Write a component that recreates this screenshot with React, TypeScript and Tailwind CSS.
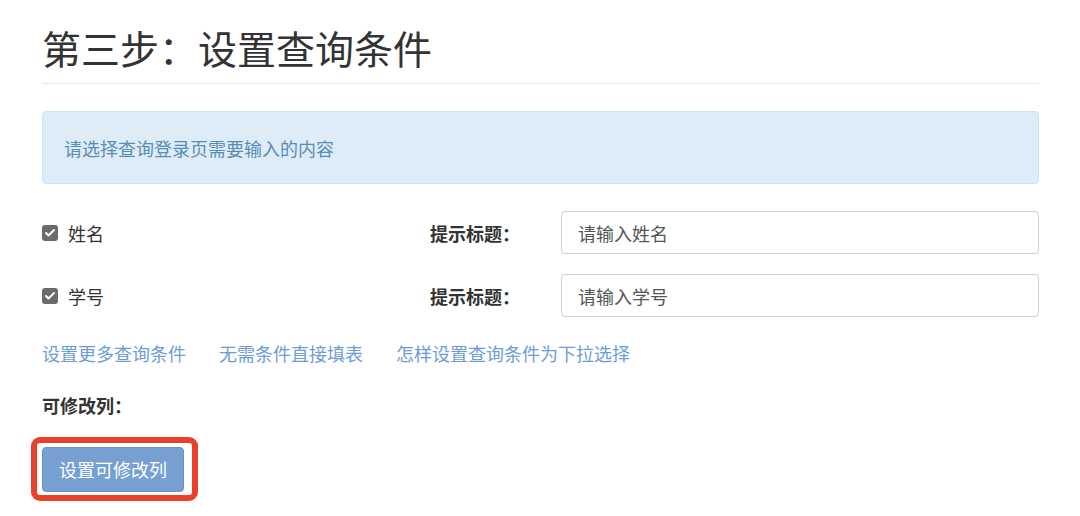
import { Check } from 'lucide-react';

const font = { fontFamily: '"Noto Sans CJK SC", "Noto Sans", sans-serif' };

function FieldRow({ label, value }: { label: string; value: string }) {
  return (
    <div className="flex items-center h-[43px]">
      <div className="w-[388px] flex items-center gap-[10px]">
        <span className="w-[16px] h-[16px] rounded-[3px] bg-[#6b6b6b] flex items-center justify-center">
          <Check className="w-[12px] h-[12px] text-white" strokeWidth={4} />
        </span>
        <span className="text-[18px] leading-6 text-[#333]">{label}</span>
      </div>
      <div className="w-[131px] text-[18px] leading-6 font-bold text-[#333]">提示标题：</div>
      <input
        readOnly
        value={value}
        className="flex-1 h-[43px] border border-[#cfcfcf] rounded-[4px] px-[16px] text-[18px] text-[#555] outline-none"
        style={font}
      />
    </div>
  );
}

export default function App() {
  return (
    <div className="w-[1080px] h-[516px] bg-white pl-[42px] pr-[41px] overflow-hidden" style={font}>
      <div className="pt-[26px] pb-[14px] border-b border-[#e8e8e8]">
        <h1 className="text-[39px] leading-[43px] text-[#333] font-normal">第三步：设置查询条件</h1>
      </div>

      <div className="mt-[27px] h-[73px] flex items-center pl-[21px] bg-[#deecf7] border border-[#cde5f0] rounded-[4px]">
        <span className="text-[18px] leading-6 text-[#5b8cb3]">请选择查询登录页需要输入的内容</span>
      </div>

      <div className="mt-[27px] flex flex-col gap-[20px]">
        <FieldRow label="姓名" value="请输入姓名" />
        <FieldRow label="学号" value="请输入学号" />
      </div>

      <div className="mt-[24px] flex gap-[33px] text-[18px] leading-6 text-[#6e9dd3]">
        <a>设置更多查询条件</a>
        <a>无需条件直接填表</a>
        <a>怎样设置查询条件为下拉选择</a>
      </div>

      <div className="mt-[28px] text-[18px] leading-6 font-bold text-[#333]">可修改列：</div>

      <div className="mt-[30px] relative inline-block">
        <button className="h-[45px] px-[16px] bg-[#779fd2] border border-[#6b93c7] rounded-[4px] text-white text-[18px]">
          设置可修改列
        </button>
        <span className="absolute -left-[11px] -right-[14px] -top-[10px] -bottom-[9px] border-[6px] border-[#e8402b] rounded-[9px]" />
      </div>
    </div>
  );
}
